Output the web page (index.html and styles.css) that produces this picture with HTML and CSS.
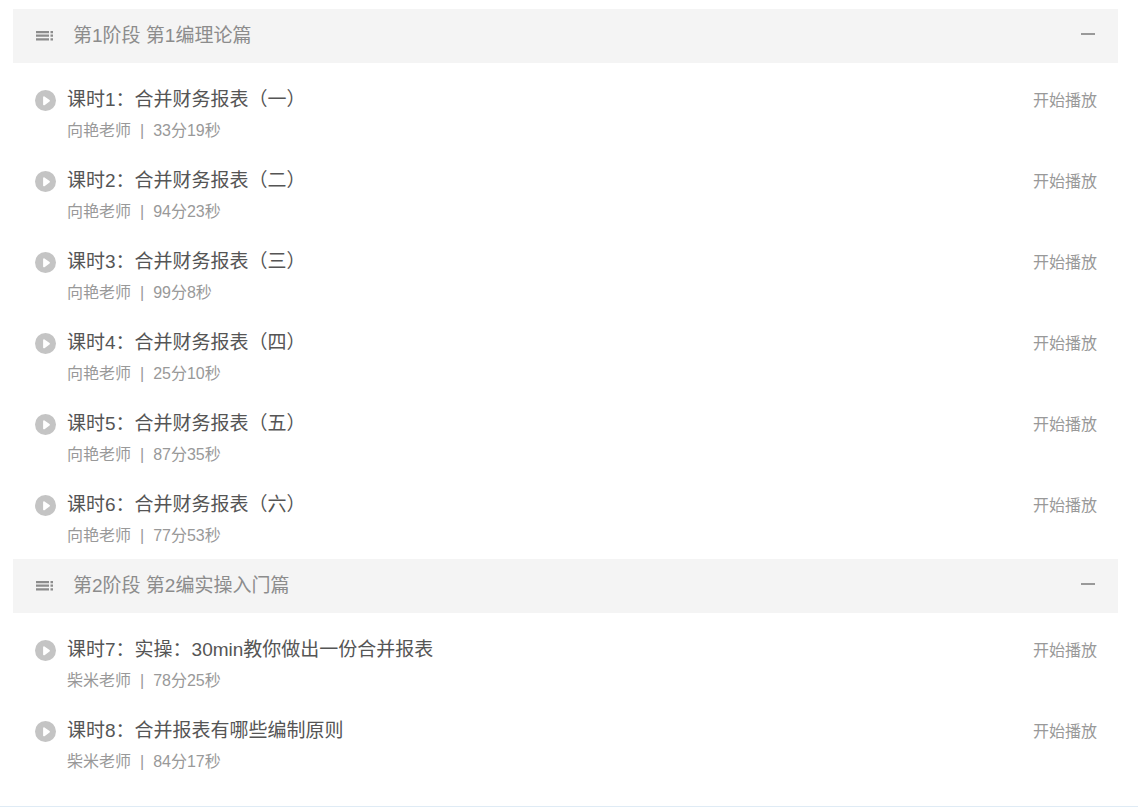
FILE: index.html
```html
<!DOCTYPE html>
<html lang="zh-CN">
  <head>
    <meta charset="UTF-8" />
    <meta name="viewport" content="width=device-width, initial-scale=1.0" />
    <link rel="stylesheet" href="styles.css">
    <title>课程目录</title>
  </head>
  <body>
    <svg class="sprite" width="0" height="0" aria-hidden="true">
      <symbol id="icon-list" viewBox="0 0 18 12">
        <path d="M1 1h13v2.2H1zM1 4.6h13v2.2H1zM1 8.2h13v2.4H1zM15.5 1h2.5v2.2h-2.5zM15.5 4.6h2.5v2.2h-2.5zM15.5 8.2h2.5v2.4h-2.5z" />
      </symbol>
      <symbol id="icon-play" viewBox="0 0 22 22">
        <circle cx="10.5" cy="10.5" r="10.5" />
        <path d="M9 7.2l5 3.6-5 3.6z" fill="#fff" stroke="#fff" stroke-width="1.8" stroke-linejoin="round" />
      </symbol>
    </svg>

    <main class="course">
      <section class="stage">
        <div class="stage-header">
          <svg class="icon-list"><use href="#icon-list" /></svg>
          <h2 class="stage-title">第1阶段 第1编理论篇</h2>
          <button class="toggle" type="button" aria-label="收起" aria-expanded="true"></button>
        </div>
        <ul class="lessons">
          <li class="lesson">
            <svg class="icon-play"><use href="#icon-play" /></svg>
            <div class="lesson-info">
              <h3 class="lesson-title">课时1：合并财务报表（一）</h3>
              <p class="lesson-meta">向艳老师<span class="divider">|</span>33分19秒</p>
            </div>
            <a class="play-link" href="#">开始播放</a>
          </li>
          <li class="lesson">
            <svg class="icon-play"><use href="#icon-play" /></svg>
            <div class="lesson-info">
              <h3 class="lesson-title">课时2：合并财务报表（二）</h3>
              <p class="lesson-meta">向艳老师<span class="divider">|</span>94分23秒</p>
            </div>
            <a class="play-link" href="#">开始播放</a>
          </li>
          <li class="lesson">
            <svg class="icon-play"><use href="#icon-play" /></svg>
            <div class="lesson-info">
              <h3 class="lesson-title">课时3：合并财务报表（三）</h3>
              <p class="lesson-meta">向艳老师<span class="divider">|</span>99分8秒</p>
            </div>
            <a class="play-link" href="#">开始播放</a>
          </li>
          <li class="lesson">
            <svg class="icon-play"><use href="#icon-play" /></svg>
            <div class="lesson-info">
              <h3 class="lesson-title">课时4：合并财务报表（四）</h3>
              <p class="lesson-meta">向艳老师<span class="divider">|</span>25分10秒</p>
            </div>
            <a class="play-link" href="#">开始播放</a>
          </li>
          <li class="lesson">
            <svg class="icon-play"><use href="#icon-play" /></svg>
            <div class="lesson-info">
              <h3 class="lesson-title">课时5：合并财务报表（五）</h3>
              <p class="lesson-meta">向艳老师<span class="divider">|</span>87分35秒</p>
            </div>
            <a class="play-link" href="#">开始播放</a>
          </li>
          <li class="lesson">
            <svg class="icon-play"><use href="#icon-play" /></svg>
            <div class="lesson-info">
              <h3 class="lesson-title">课时6：合并财务报表（六）</h3>
              <p class="lesson-meta">向艳老师<span class="divider">|</span>77分53秒</p>
            </div>
            <a class="play-link" href="#">开始播放</a>
          </li>
        </ul>
      </section>

      <section class="stage">
        <div class="stage-header">
          <svg class="icon-list"><use href="#icon-list" /></svg>
          <h2 class="stage-title">第2阶段 第2编实操入门篇</h2>
          <button class="toggle" type="button" aria-label="收起" aria-expanded="true"></button>
        </div>
        <ul class="lessons">
          <li class="lesson">
            <svg class="icon-play"><use href="#icon-play" /></svg>
            <div class="lesson-info">
              <h3 class="lesson-title">课时7：实操：30min教你做出一份合并报表</h3>
              <p class="lesson-meta">柴米老师<span class="divider">|</span>78分25秒</p>
            </div>
            <a class="play-link" href="#">开始播放</a>
          </li>
          <li class="lesson">
            <svg class="icon-play"><use href="#icon-play" /></svg>
            <div class="lesson-info">
              <h3 class="lesson-title">课时8：合并报表有哪些编制原则</h3>
              <p class="lesson-meta">柴米老师<span class="divider">|</span>84分17秒</p>
            </div>
            <a class="play-link" href="#">开始播放</a>
          </li>
        </ul>
      </section>
    </main>
  </body>
</html>
```
FILE: styles.css
```css
body {
    margin: 0;
    background-color: #fff;
    font-family: "Liberation Sans", Arial, "Noto Sans CJK SC", sans-serif;
    font-size: 16px;
    color: #999;
}

h2, h3, p, ul {
    margin: 0;
    padding: 0;
    font-weight: normal;
}

.sprite {
    display: block;
}

.course {
    padding: 9px 20px 21px 13px;
    border-bottom: 1px solid #dfebf5;
}

.stage-header {
    display: flex;
    align-items: center;
    height: 54px;
    padding: 0 22px;
    background-color: #f4f4f4;
}

.icon-list {
    width: 18px;
    height: 12px;
    margin-right: 20px;
    fill: #8c8c8c;
}

.stage-title {
    flex: 1;
    font-size: 19px;
    line-height: 30px;
    color: #8c8c8c;
}

.toggle {
    display: flex;
    align-items: center;
    justify-content: center;
    width: 16px;
    height: 16px;
    margin-bottom: 4px;
    padding: 0;
    border: 0;
    background: none;
    cursor: pointer;
}

.toggle::before {
    content: "";
    width: 14px;
    height: 2px;
    background-color: #999;
}

.lessons {
    padding-top: 10px;
    list-style: none;
}

.lesson {
    display: flex;
    align-items: flex-start;
    padding: 12px 21px 7px 22px;
}

.icon-play {
    width: 22px;
    height: 22px;
    margin: 5px 10px 0 0;
    fill: #c4c4c4;
}

.lesson-info {
    flex: 1;
}

.lesson-title {
    font-size: 19px;
    line-height: 30px;
    color: #555;
}

.lesson-meta {
    line-height: 32px;
}

.divider {
    margin: 0 9px;
}

.play-link {
    line-height: 32px;
    color: #999;
    text-decoration: none;
}
```
